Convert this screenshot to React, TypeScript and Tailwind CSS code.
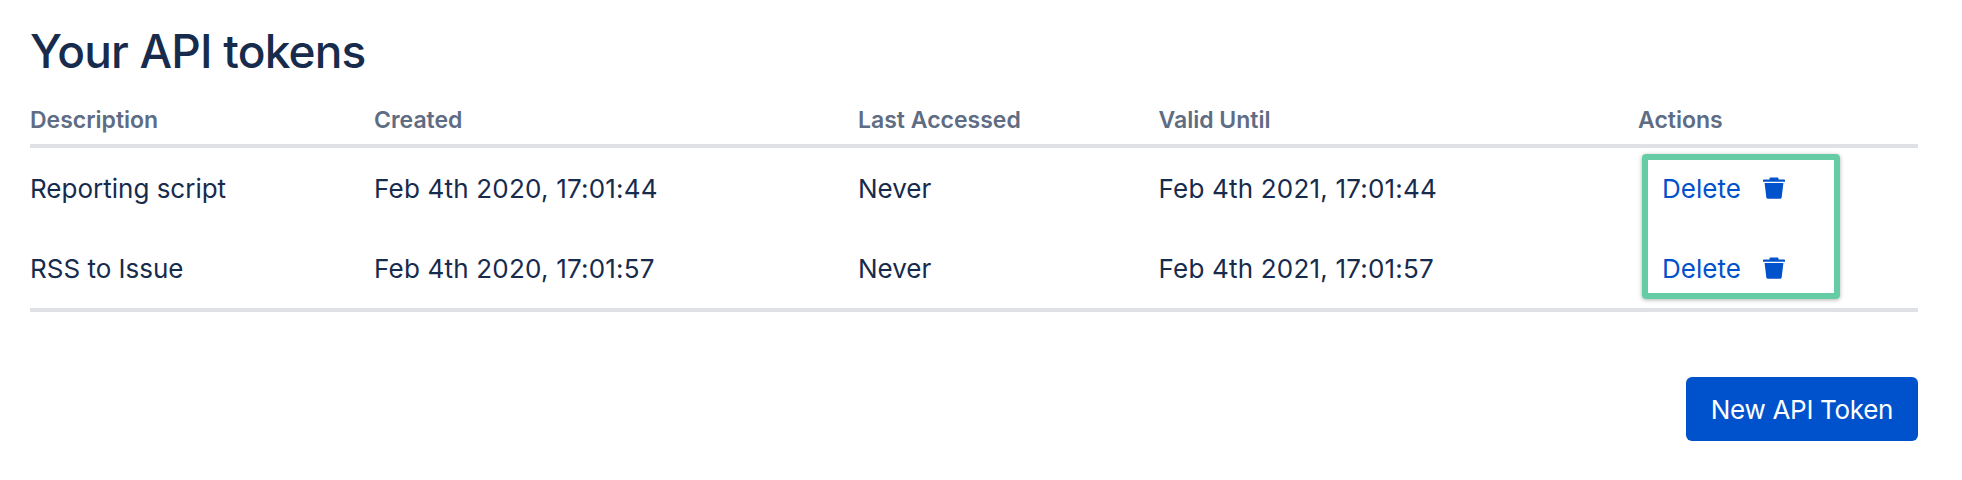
const cols = "grid grid-cols-[344px_484px_300.5px_479.5px_1fr] items-center";
const rows = [
  ["Reporting script", "Feb 4th 2020, 17:01:44", "Never", "Feb 4th 2021, 17:01:44"],
  ["RSS to Issue", "Feb 4th 2020, 17:01:57", "Never", "Feb 4th 2021, 17:01:57"],
];

function Trash() {
  return (
    <svg width="22" height="22" viewBox="0 0 22 22" className="block" fill="#0052cc">
      <path d="M7.5 0.5h7a1 1 0 0 1 1 1V2.5h5.7a.8.8 0 0 1 .8.8v1.4H0V3.3a.8.8 0 0 1 .8-.8h5.7V1.5a1 1 0 0 1 1-1z" />
      <path d="M1.6 6h18.8l-1.7 14.2a1.8 1.8 0 0 1-1.8 1.6H5.1a1.8 1.8 0 0 1-1.8-1.6z" />
    </svg>
  );
}

export default function App() {
  return (
    <div className="w-[1962px] h-[480px] bg-white overflow-hidden pl-[30px] pt-[24px] pr-[44px] font-['Inter',sans-serif] text-[#172b4d]">
      <h1 className="text-[46px] leading-[54px] font-medium tracking-[-0.8px]">Your API tokens</h1>
      <div className="relative mt-[14px]">
        <div className={`${cols} h-[56px] pt-[4px] border-b-4 border-[#dfe1e6] text-[23px] font-semibold text-[#5e6c84]`}>
          <div>Description</div>
          <div>Created</div>
          <div>Last Accessed</div>
          <div>Valid Until</div>
          <div>Actions</div>
        </div>
        {rows.map((r) => (
          <div key={r[0]} className={`${cols} h-[80px] text-[26px]`}>
            {r.map((c, i) => (
              <div key={i} className={i === 1 || i === 3 ? "tracking-[0.2px]" : ""}>{c}</div>
            ))}
            <div className="flex items-center pl-[24px] gap-[22px] text-[#0052cc]">
              <span>Delete</span>
              <Trash />
            </div>
          </div>
        ))}
        <div className="h-[4px] bg-[#dfe1e6]" />
        <div className="absolute left-[1612px] top-[62px] w-[198px] h-[145px] border-[6px] border-[#66cca5] rounded-[4px] shadow-[0_1px_4px_rgba(0,0,0,0.3)]" />
      </div>
      <div className="flex justify-end mt-[65px]">
        <button className="w-[232px] h-[64px] rounded-[6px] bg-[#0052cc] text-white text-[26px] font-normal tracking-[-0.3px]">New API Token</button>
      </div>
    </div>
  );
}
